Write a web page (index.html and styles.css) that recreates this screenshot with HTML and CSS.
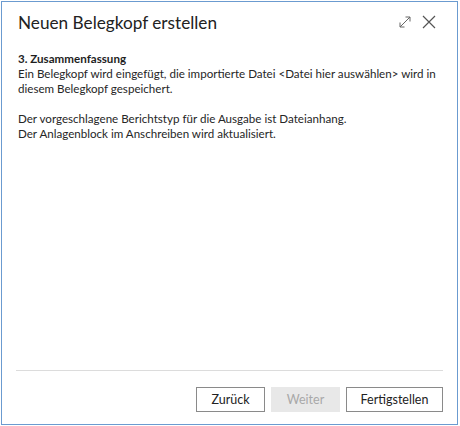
FILE: index.html
```html
<!DOCTYPE html>
<html lang="de">
<head>
<meta charset="utf-8">
<link rel="stylesheet" href="styles.css">
</head>
<body>
<div class="dialog">
  <div class="header">
    <h1 class="title">Neuen Belegkopf erstellen</h1>
    <div class="actions">
      <svg class="icon" width="14" height="14" viewBox="0 0 14 14"><path d="M2 12 L12 2 M7.5 2 H12 V6.5 M2 7.5 V12 H6.5" fill="none" stroke="#666" stroke-width="1"/></svg>
      <svg class="icon" width="16" height="16" viewBox="0 0 16 16"><path d="M2 2 L14 14 M14 2 L2 14" fill="none" stroke="#555" stroke-width="1.2"/></svg>
    </div>
  </div>
  <div class="content">
    <p class="step">3. Zusammenfassung</p>
    <p>Ein Belegkopf wird eingefügt, die importierte Datei &lt;Datei hier auswählen&gt; wird in diesem Belegkopf gespeichert.</p>
    <p class="gap">Der vorgeschlagene Berichtstyp für die Ausgabe ist Dateianhang.<br>Der Anlagenblock im Anschreiben wird aktualisiert.</p>
  </div>
  <div class="footer">
    <button class="btn">Zurück</button>
    <button class="btn disabled">Weiter</button>
    <button class="btn wide">Fertigstellen</button>
  </div>
</div>
</body>
</html>
```
FILE: styles.css
```css
html, body { margin: 0; padding: 0; background: #fff; }
body { width: 460px; height: 426px; }
.dialog {
  box-sizing: border-box;
  margin: 1px 0 0 1px;
  width: 457px;
  height: 424px;
  border: 1.5px solid #6b9bd0;
  display: flex;
  flex-direction: column;
  font-family: "Lato", "Liberation Sans", sans-serif;
  color: #262626;
}
.header {
  display: flex;
  align-items: center;
  justify-content: space-between;
  padding: 6px 20px 0 16px;
  height: 28px;
}
.title { margin: 0; font-size: 17.2px; font-weight: 400; color: #222; }
.actions { display: flex; align-items: center; gap: 9px; }
.icon { display: block; }
.content { flex: 1; padding: 15px 6px 0 16px; font-size: 11.6px; line-height: 15px; }
.content p { margin: 0; }
.content .step { font-weight: 700; color: #1e1e1e; }
.content .gap { margin-top: 15px; }
.footer {
  margin: 0 14px;
  border-top: 1px solid #dcdcdc;
  padding: 16px 0 12px;
  display: flex;
  justify-content: flex-end;
  gap: 6px;
}
.btn {
  font-family: "Lato", "Liberation Sans", sans-serif;
  font-size: 12.5px;
  color: #222;
  background: #fff;
  border: 1px solid #8a8a8a;
  height: 25px;
  width: 69px;
  padding: 0;
}
.btn.disabled { background: #e8e8e8; border-color: #e8e8e8; color: #a8a8a8; }
.btn.wide { width: 97px; }
```
